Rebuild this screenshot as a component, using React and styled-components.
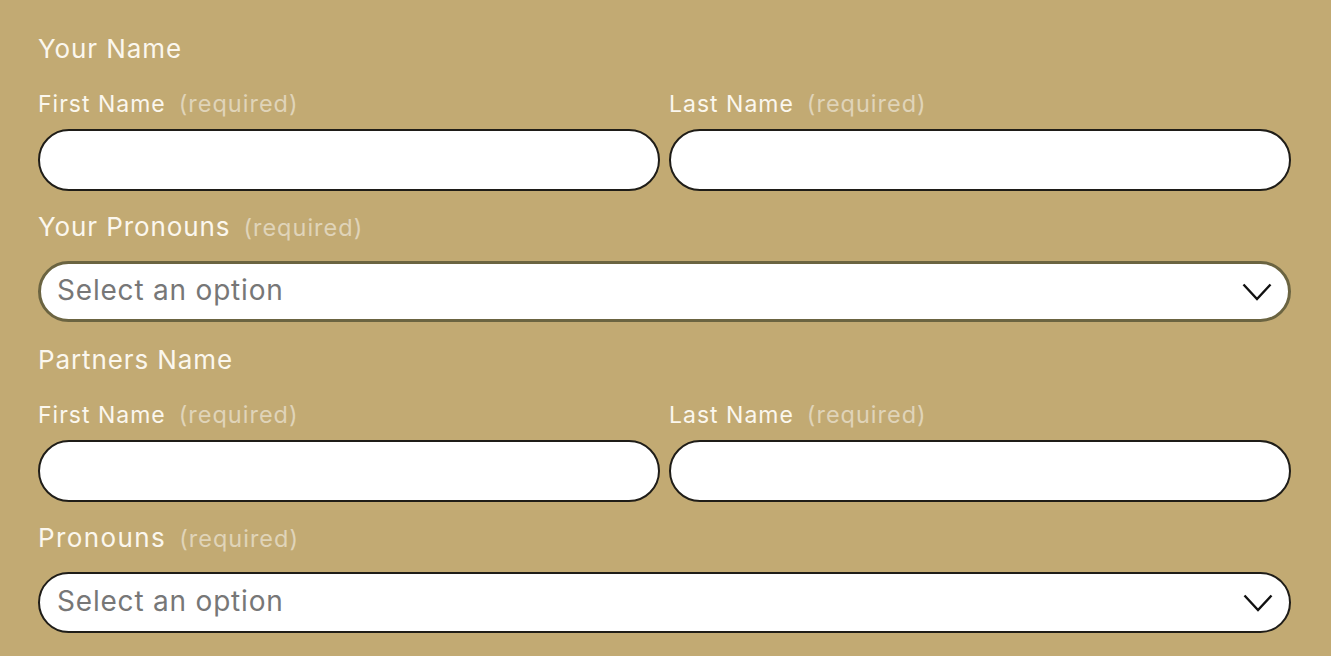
import React from 'react'
import styled, { createGlobalStyle } from 'styled-components'

const GlobalStyle = createGlobalStyle`
	html, body {
		margin: 0;
		background: #c2aa73;
	}
	body {
		font-family: 'Inter', 'Liberation Sans', sans-serif;
	}
`

const StyledForm = styled.form`
	display: flex;
	flex-direction: column;
	width: 1253px;
	padding: 34px 0 0 38px;
	box-sizing: content-box;
`

const StyledTitle = styled.div`
	color: #fbf7ee;
	font-size: 26px;
	letter-spacing: ${p => p.wide ? 1.4 : 0.9}px;
	line-height: 30px;
	margin-bottom: ${p => p.gap || 26}px;
`

const StyledRequired = styled.span`
	color: rgba(255, 255, 255, 0.5);
	margin-left: 13px;
	font-size: 23.5px;
	letter-spacing: 1px;
`

const StyledRow = styled.div`
	display: grid;
	grid-template-columns: 1fr 1fr;
	gap: 9px;
	margin-bottom: 21px;
`

const StyledLabel = styled.label`
	display: block;
	color: #fbf7ee;
	font-size: 23px;
	letter-spacing: 1px;
	line-height: 28px;
	margin-bottom: 11px;
`

const StyledInput = styled.input`
	display: block;
	width: 100%;
	box-sizing: border-box;
	height: 62px;
	border: 2px solid #1f1d18;
	border-radius: 31px;
	background: #fff;
	outline: none;
	font: inherit;
`

const StyledSelect = styled.div`
	display: flex;
	align-items: center;
	justify-content: space-between;
	box-sizing: border-box;
	height: 61px;
	width: 1253px;
	padding: 0 16px 3px ${p => p.focused ? 16 : 17}px;
	border: ${p => p.focused ? '3px solid #6b6441' : '2px solid #1f1d18'};
	border-radius: 31px;
	background: #fff;
	color: #777;
	font-size: 28px;
	letter-spacing: 0.8px;
	margin-bottom: 23px;

	svg {
		margin-top: 3px;
	}
`

const Chevron = () => (
	<svg width="30" height="18" viewBox="0 0 30 18" fill="none">
		<path d="M1.5 1.5 L15 16 L28.5 1.5" stroke="#111" strokeWidth="2.4" />
	</svg>
)

const NameRow = () => (
	<StyledRow>
		<div>
			<StyledLabel>First Name<StyledRequired>(required)</StyledRequired></StyledLabel>
			<StyledInput />
		</div>
		<div>
			<StyledLabel>Last Name<StyledRequired>(required)</StyledRequired></StyledLabel>
			<StyledInput />
		</div>
	</StyledRow>
)

const App = () => (
	<>
		<GlobalStyle />
		<StyledForm>
			<StyledTitle>Your Name</StyledTitle>
			<NameRow />
			<StyledTitle gap={18}>Your Pronouns<StyledRequired>(required)</StyledRequired></StyledTitle>
			<StyledSelect focused>Select an option<Chevron /></StyledSelect>
			<StyledTitle>Partners Name</StyledTitle>
			<NameRow />
			<StyledTitle gap={18} wide>Pronouns<StyledRequired>(required)</StyledRequired></StyledTitle>
			<StyledSelect>Select an option<Chevron /></StyledSelect>
		</StyledForm>
	</>
)

export default App
